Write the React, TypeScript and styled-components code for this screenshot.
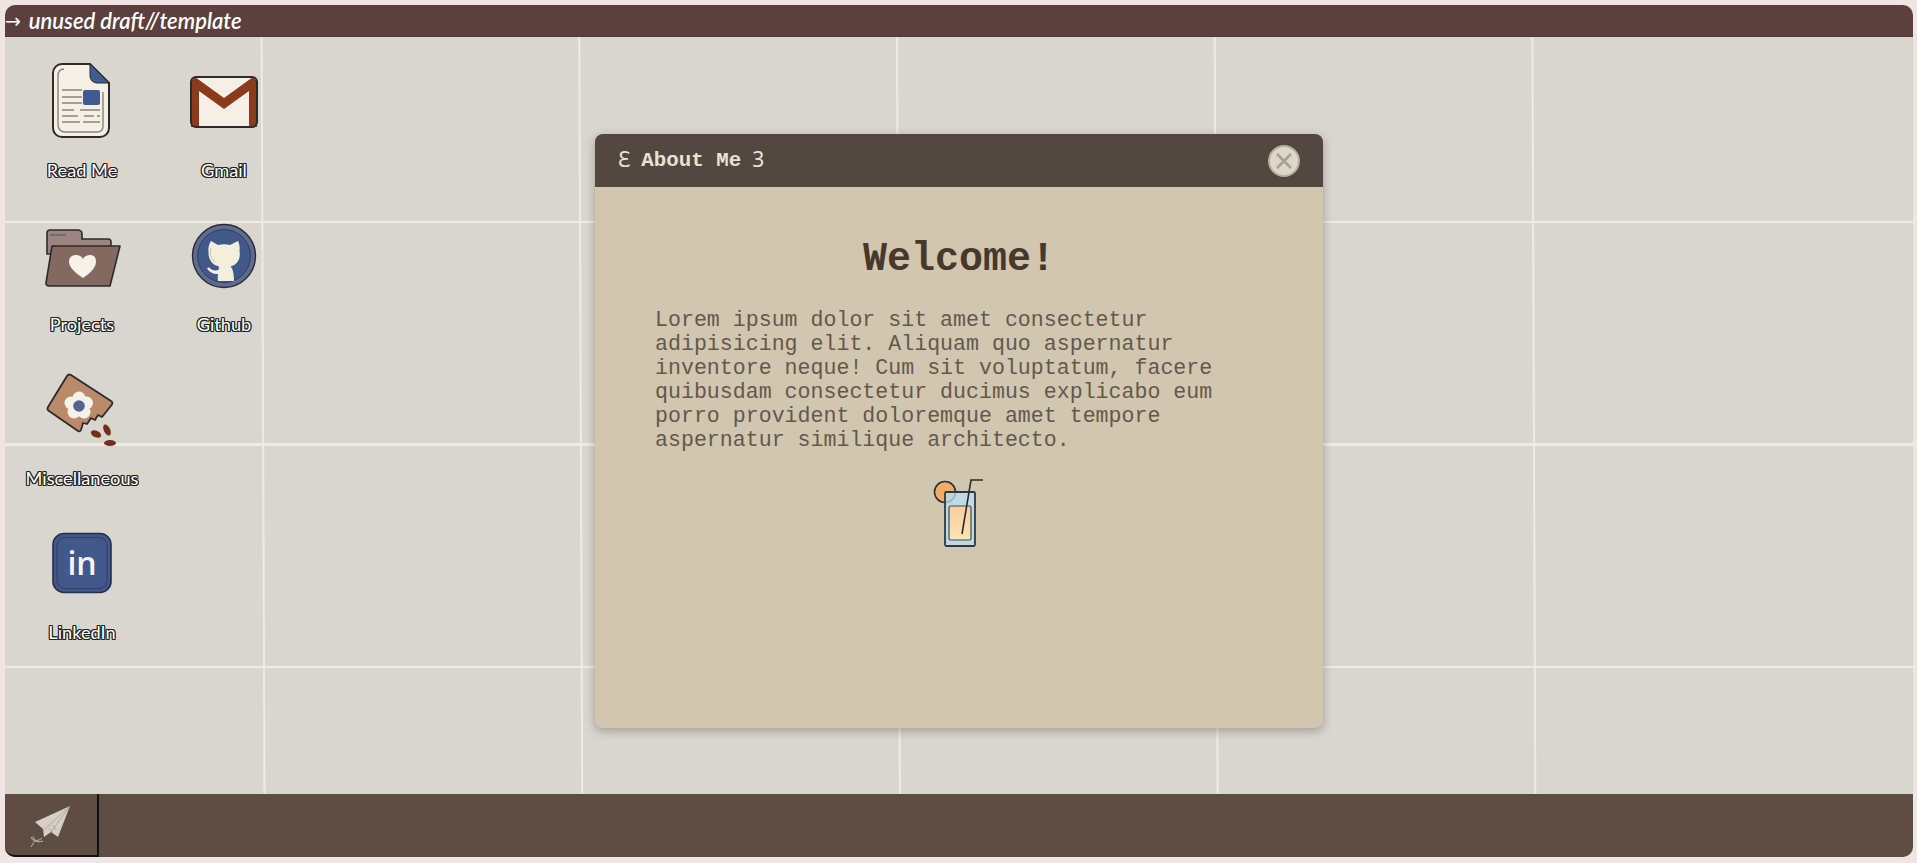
import React from "react";
import styled, { createGlobalStyle } from "styled-components";

const Global = createGlobalStyle`
  html, body { margin: 0; padding: 0; background: #f1e5e3; overflow: hidden; }
`;

const Screen = styled.div`
  box-sizing: border-box;
  width: 1917px;
  height: 863px;
  padding: 5px 4px 6px 5px;
  display: flex;
  flex-direction: column;
`;

const TitleBar = styled.header`
  height: 32px;
  flex: none;
  box-sizing: border-box;
  background: #5c403d;
  border-radius: 10px 10px 0 0;
  display: flex;
  align-items: center;
  gap: 8px;
  color: #fff;
  font: italic 600 22px "Lato", "Noto Sans", sans-serif;
  border-bottom: 1px solid #4e3a37;
`;

const Arrow = styled.span`
  font: normal 400 20px "DejaVu Sans", sans-serif;
  margin-right: -1px;
  transform: scaleX(0.95);
  transform-origin: left;
`;

const Desktop = styled.main`
  position: relative;
  flex: 1;
  background-color: #d9d6cf;
  background-repeat: no-repeat;
  background-size: 1560px 100%, 100% 100%;
  background-image:
    repeating-linear-gradient(89.78deg, transparent 0, transparent 258px, #eeebe6 259px, #eeebe6 260px, transparent 261px, transparent 317.7px),
    repeating-linear-gradient(180deg, transparent 0, transparent 184px, #eeebe6 184px, #eeebe6 186px, transparent 186px, transparent 222.5px);
`;

const IconGrid = styled.div`
  display: grid;
  grid-template-columns: 142px 142px;
  grid-auto-rows: 154px;
  padding: 25px 0 0 6px;
  justify-items: center;
`;

const IconItem = styled.div<{ $col?: number }>`
  grid-column: ${(p) => p.$col ?? "auto"};
  display: flex;
  flex-direction: column;
  align-items: center;
  gap: 18px;
  width: 142px;
`;

const IconArt = styled.svg`
  width: 80px;
  height: 80px;
  display: block;
`;

const IconLabel = styled.span`
  font: 400 18.2px/20px "Lato", "Noto Sans", sans-serif;
  color: #fff;
  white-space: nowrap;
  text-shadow: 1px 0 0 #222, -1px 0 0 #222, 0 1px 0 #222, 0 -1px 0 #222, 1px 1px 0 #222, -1px -1px 0 #222, 1px -1px 0 #222, -1px 1px 0 #222;
`;

const Window = styled.section`
  position: absolute;
  left: 590px;
  top: 97px;
  width: 728px;
  height: 594px;
  display: flex;
  flex-direction: column;
  background: #d1c6b0;
  border-radius: 8px;
  overflow: hidden;
  box-shadow: 0 3px 10px rgba(60, 50, 40, 0.35);
`;

const WindowHeader = styled.div`
  height: 53px;
  flex: none;
  display: flex;
  align-items: center;
  justify-content: space-between;
  box-sizing: border-box;
  padding: 0 23px 0 23px;
  background: #524840;
  color: #e9e2d4;
`;

const WindowTitle = styled.h2`
  margin: 0;
  display: flex;
  align-items: center;
  gap: 11px;
  font: 700 20.8px "Liberation Mono", monospace;
`;

const Brace = styled.span`
  font: 400 21px "Noto Sans", sans-serif;
  margin-top: -3px;
`;

const CloseButton = styled.button`
  width: 32px;
  height: 32px;
  margin-top: 1px;
  padding: 0;
  box-sizing: border-box;
  display: flex;
  align-items: center;
  justify-content: center;
  border-radius: 50%;
  border: 2px solid #b8ae9b;
  background: #ddd7ca;
`;

const WindowBody = styled.div`
  flex: 1;
  display: flex;
  flex-direction: column;
  align-items: center;
  padding: 50px 60px 0;
`;

const Heading = styled.h1`
  margin: 0 0 26px;
  font: 700 40px/45px "Liberation Mono", monospace;
  color: #46392c;
`;

const Paragraph = styled.p`
  margin: 0 0 21px;
  font: 400 21.6px/24px "Liberation Mono", monospace;
  color: #65584b;
  width: 100%;
`;

const TaskBar = styled.footer`
  height: 63px;
  flex: none;
  background: #5e4d42;
  border-radius: 0 0 10px 10px;
  display: flex;
`;

const StartButton = styled.button`
  width: 94px;
  height: 63px;
  padding: 0;
  box-sizing: border-box;
  display: flex;
  align-items: center;
  justify-content: center;
  background: transparent;
  border: none;
  border-right: 2px solid #111;
  border-bottom: 2px solid #111;
  border-radius: 0 0 0 10px;
`;

const PlaneArt = styled.svg`
  width: 48px;
  height: 48px;
  display: block;
`;

const ReadMeIcon = () => (
  <IconArt viewBox="0 0 80 80">
    <path d="M20 2H48L67 21V66a9 9 0 0 1-9 9H20a9 9 0 0 1-9-9V11a9 9 0 0 1 9-9Z" fill="#f5efe6" stroke="#2d2a2c" strokeWidth="2" />
    <path d="M48 2 67 21H55a7 7 0 0 1-7-7Z" fill="#3f5b8f" stroke="#2d2a2c" strokeWidth="1" />
    <path d="M22 7c-4 0-6 3-6 7v49c0 4 3 7 7 7h32c4 0 6-2 6-6V30" fill="none" stroke="#8c8379" strokeWidth="1.4" />
    <rect x="41" y="28" width="17" height="15" rx="2" fill="#3f5b8f" />
    <path d="M20 28H40M20 35H40M20 41H40M20 48H32M38 48H58M20 54H36M42 54H52M55 54H58M20 60H38M41 60H58" stroke="#8c8379" strokeWidth="1.6" />
  </IconArt>
);

const GmailIcon = () => (
  <IconArt viewBox="0 0 80 80">
    <rect x="7" y="15" width="66" height="50" rx="5" fill="#f5efe6" />
    <path d="M7 19 11 15 40 36 69 15 73 19V65H65V29L40 47 15 29V65H7Z" fill="#8c3a1c" />
    <rect x="7" y="15" width="66" height="50" rx="5" fill="none" stroke="#2d2a2c" strokeWidth="2" />
  </IconArt>
);

const ProjectsIcon = () => (
  <IconArt viewBox="0 0 80 80">
    <path d="M8 14H36a4 4 0 0 1 4 4v5H66a3 3 0 0 1 3 3v12H5V17a3 3 0 0 1 3-3Z" fill="#9a8580" stroke="#2d2a2c" strokeWidth="1.6" />
    <path d="M8 19H24" stroke="#5d4c48" strokeWidth="1" />
    <path d="M10 30H78L68 70H7a3 3 0 0 1-3-3Z" fill="#83695f" stroke="#2d2a2c" strokeWidth="1.6" strokeLinejoin="round" />
    <path d="M41 62C32 56 27 51 27 45.500 27 41 30.500 39 34 39 37 39 39.500 40 41 43 42.500 40 45 39 48 39 51.500 39 54 41 54 45.500 54 51 50 56 41 62Z" fill="#f7f1e8" />
  </IconArt>
);

const GithubIcon = () => (
  <IconArt viewBox="0 0 80 80">
    <circle cx="40" cy="40" r="31.500" fill="#5d6b8f" stroke="#2d2d35" strokeWidth="1.400" />
    <circle cx="40" cy="40" r="26.500" fill="#40588c" stroke="#2d3552" strokeWidth="0.800" />
    <path d="M27 25 34 29C38 28 42 28 46 29L54 25C55.500 28 56 32 55.500 35 57 43 53 49 46.500 50.500 49 53 50 58 50 65H34C33.500 62 34 60 34 58 29 58 25 56 23 52L25 51.500C28 54.500 31 55 34.500 54L35 50.500C28 49 24 43 24.500 35 24 32 25 28 27 25Z" fill="#f3efdc" />
    <path d="M27 32c-2 5 0 11 4 14" fill="none" stroke="#b9b6a6" strokeWidth="0.800" />
  </IconArt>
);

const MiscIcon = () => (
  <IconArt viewBox="0 0 80 80">
    <path d="M25 6a3 3 0 0 1 4-1L69 31a2.500 2.500 0 0 1 1 3.500L60 47 56 45 53 50 49 48 45 54 41 53 39 60a2 2 0 0 1-3 1L7 41a3 3 0 0 1-1-4Z" fill="#bb8a68" stroke="#2d2a2c" strokeWidth="1.800" strokeLinejoin="round" />
    <g fill="#f7f2e9">
      <circle cx="37" cy="28" r="6.500" />
      <circle cx="44.500" cy="33" r="6.500" />
      <circle cx="42" cy="42" r="6.500" />
      <circle cx="32" cy="42" r="6.500" />
      <circle cx="29" cy="33" r="6.500" />
    </g>
    <circle cx="37" cy="36" r="7" fill="#f7f2e9" />
    <circle cx="37" cy="36" r="5.800" fill="#55648f" />
    <g fill="#6f2f18">
      <ellipse cx="54" cy="64" rx="5.500" ry="3.200" transform="rotate(25 54 64)" />
      <ellipse cx="65" cy="60" rx="6" ry="3.200" transform="rotate(65 65 60)" />
      <ellipse cx="68" cy="73" rx="6" ry="3" />
    </g>
  </IconArt>
);

const LinkedInIcon = () => (
  <IconArt viewBox="0 0 80 80">
    <rect x="11" y="9.500" width="58" height="59" rx="11" fill="#42588a" stroke="#26304c" strokeWidth="1.600" />
    <rect x="15" y="13.500" width="50" height="51" rx="8" fill="none" stroke="#2f3f66" strokeWidth="1" />
    <text x="40" y="51" textAnchor="middle" fontFamily="Open Sans, sans-serif" fontWeight="600" fontSize="32" fill="#fbf7ee">in</text>
  </IconArt>
);

const DrinkIcon = () => (
  <IconArt viewBox="-1 0 80 80">
    <defs>
      <linearGradient id="juice" x1="0" y1="0" x2="0" y2="1">
        <stop offset="0" stopColor="#f6cf9f" />
        <stop offset="1" stopColor="#fde3b5" />
      </linearGradient>
    </defs>
    <circle cx="25" cy="19" r="10.500" fill="#f0ad67" stroke="#2d3038" strokeWidth="1.600" />
    <rect x="25" y="19" width="30" height="54" rx="1.500" fill="#b8e0f5" fillOpacity="0.75" stroke="#2d3a44" strokeWidth="1.800" />
    <rect x="29" y="33" width="22" height="34" rx="1.500" fill="url(#juice)" stroke="#3d4a50" strokeWidth="1.200" />
    <path d="M42 61 51 7H63" fill="none" stroke="#2d2a2c" strokeWidth="1.600" />
  </IconArt>
);

const PlaneIcon = () => (
  <PlaneArt viewBox="0 0 48 48">
    <path d="M43 5 8 21 16 28 17 36 24 31 31 36Z" fill="#d6cfc6" />
    <path d="M43 5 17 29M43 5 24 31M22 27 25 31M26 24 29 29" stroke="#9a9086" strokeWidth="0.600" fill="none" />
    <path d="M15 37c-3 3-7 3-10 1-2-2 1-3 2-1 1 3-1 6-3 9M8 40c3 1 5 1 8 0" fill="none" stroke="#d6cfc6" strokeWidth="0.800" />
  </PlaneArt>
);

const CloseIcon = () => (
  <svg width="20" height="20" viewBox="0 0 20 20">
    <path d="M3 3 17 17M17 3 3 17" stroke="#a89f8e" strokeWidth="2.600" />
  </svg>
);

const items = [
  { label: "Read Me", Art: ReadMeIcon },
  { label: "Gmail", Art: GmailIcon },
  { label: "Projects", Art: ProjectsIcon },
  { label: "Github", Art: GithubIcon },
  { label: "Miscellaneous", Art: MiscIcon, col: 1 },
  { label: "LinkedIn", Art: LinkedInIcon, col: 1 },
];

export default function App() {
  return (
    <Screen>
      <Global />
      <TitleBar>
        <Arrow>→</Arrow>
        <span>unused draft//template</span>
      </TitleBar>
      <Desktop>
        <IconGrid>
          {items.map(({ label, Art, col }) => (
            <IconItem key={label} $col={col}>
              <Art />
              <IconLabel>{label}</IconLabel>
            </IconItem>
          ))}
        </IconGrid>
        <Window>
          <WindowHeader>
            <WindowTitle>
              <Brace>Ɛ</Brace>
              <span>About Me</span>
              <Brace>3</Brace>
            </WindowTitle>
            <CloseButton aria-label="Close">
              <CloseIcon />
            </CloseButton>
          </WindowHeader>
          <WindowBody>
            <Heading>Welcome!</Heading>
            <Paragraph>
              Lorem ipsum dolor sit amet consectetur adipisicing elit. Aliquam quo aspernatur inventore neque! Cum sit
              voluptatum, facere quibusdam consectetur ducimus explicabo eum porro provident doloremque amet tempore
              aspernatur similique architecto.
            </Paragraph>
            <DrinkIcon />
          </WindowBody>
        </Window>
      </Desktop>
      <TaskBar>
        <StartButton aria-label="Start">
          <PlaneIcon />
        </StartButton>
      </TaskBar>
    </Screen>
  );
}
